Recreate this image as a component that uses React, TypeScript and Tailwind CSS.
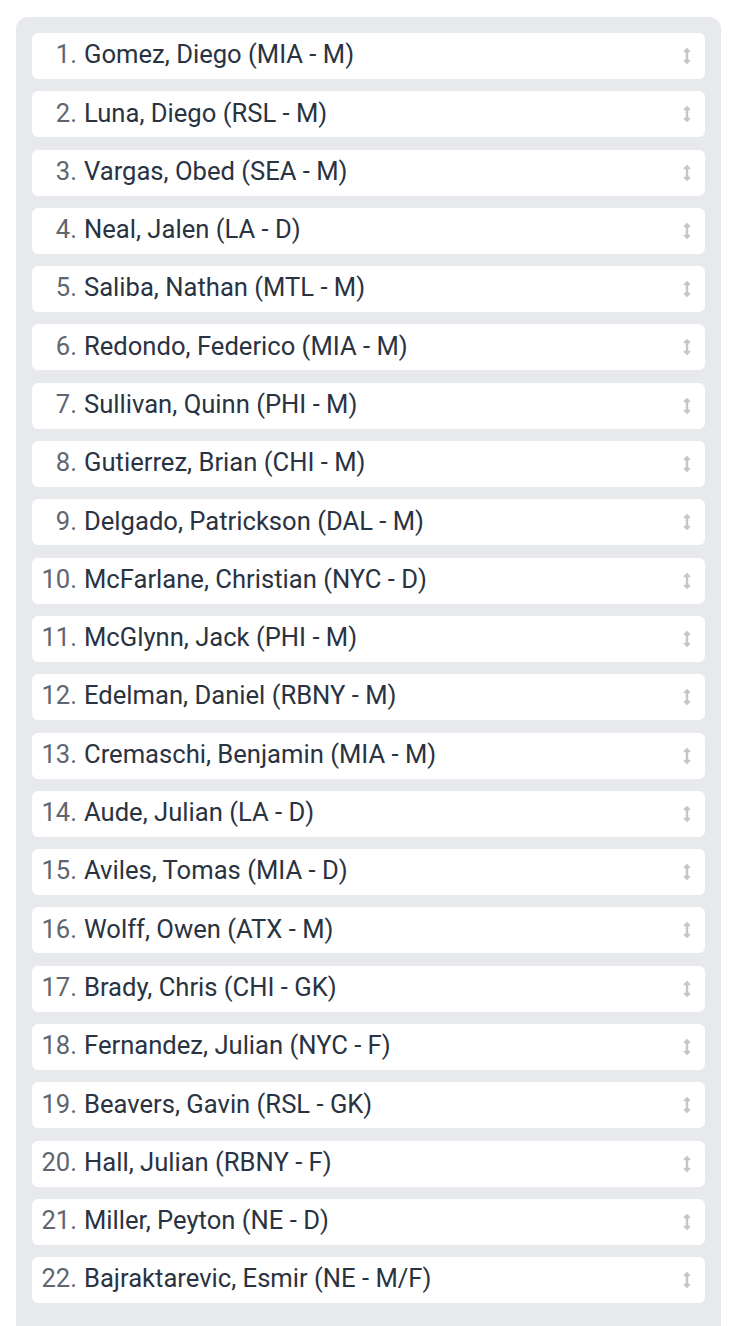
import React from 'react'
import { FaArrowsAltV } from 'react-icons/fa'

const players = [
  'Gomez, Diego (MIA - M)',
  'Luna, Diego (RSL - M)',
  'Vargas, Obed (SEA - M)',
  'Neal, Jalen (LA - D)',
  'Saliba, Nathan (MTL - M)',
  'Redondo, Federico (MIA - M)',
  'Sullivan, Quinn (PHI - M)',
  'Gutierrez, Brian (CHI - M)',
  'Delgado, Patrickson (DAL - M)',
  'McFarlane, Christian (NYC - D)',
  'McGlynn, Jack (PHI - M)',
  'Edelman, Daniel (RBNY - M)',
  'Cremaschi, Benjamin (MIA - M)',
  'Aude, Julian (LA - D)',
  'Aviles, Tomas (MIA - D)',
  'Wolff, Owen (ATX - M)',
  'Brady, Chris (CHI - GK)',
  'Fernandez, Julian (NYC - F)',
  'Beavers, Gavin (RSL - GK)',
  'Hall, Julian (RBNY - F)',
  'Miller, Peyton (NE - D)',
  'Bajraktarevic, Esmir (NE - M/F)',
]

export default function App() {
  return (
    <div className="min-h-screen bg-white pt-[17px] pl-4 font-['Roboto',sans-serif]">
      <div className="w-[705px] rounded-t-xl bg-[#e8e9ec] px-4 pt-4 pb-10">
        <ol className="flex flex-col gap-[12.3px]">
          {players.map((name, i) => (
            <li
              key={name}
              className="flex h-[46px] items-center rounded-md bg-white pr-[14px] pb-[2px] text-[25.6px] leading-none"
            >
              <span className="w-[45px] shrink-0 text-right text-[#5f6670]">{i + 1}.</span>
              <span className="ml-[7px] text-[#2a3342]">{name}</span>
              <FaArrowsAltV className="ml-auto mt-[2px] h-[16px] w-[8px] text-[#c4c6ca]" />
            </li>
          ))}
        </ol>
      </div>
    </div>
  )
}
